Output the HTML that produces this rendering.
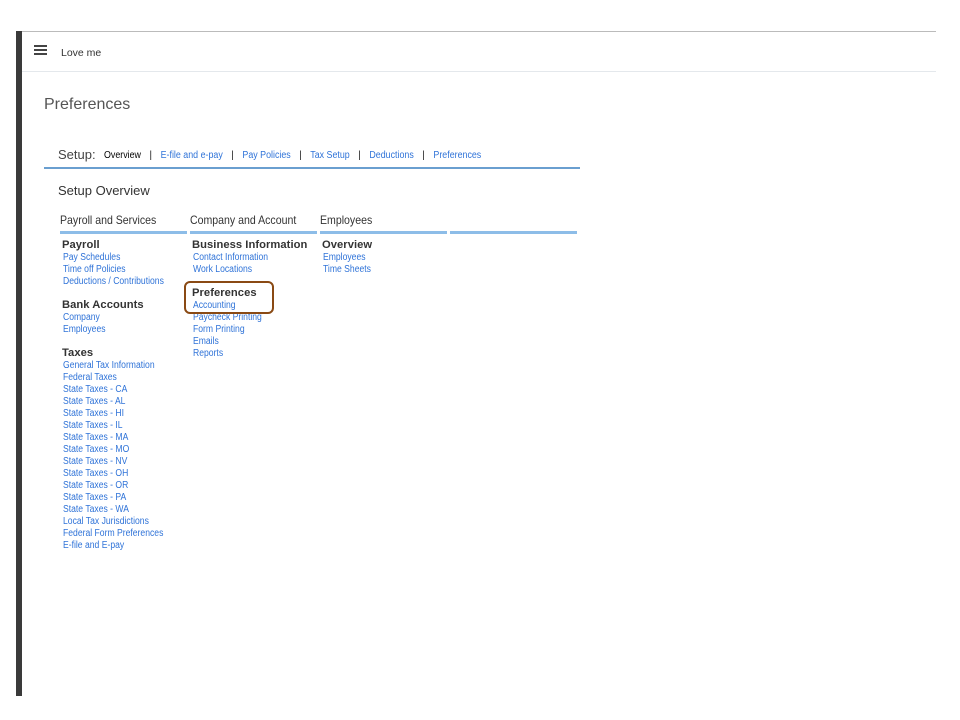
<!DOCTYPE html>
<html><head><meta charset="utf-8"><style>
body{margin:0;width:960px;height:720px;background:#fff;position:relative;font-family:"Liberation Sans",sans-serif;overflow:hidden}
.a{position:absolute;white-space:nowrap}
.lk{color:#2f73d8;font-size:10px;line-height:12px;transform:scaleX(.86);transform-origin:0 0;margin-left:1px}
.h{font-size:11.2px;font-weight:bold;color:#333;letter-spacing:.05px;line-height:14px;margin-top:1px}
.col{font-size:12px;color:#333;transform:scaleX(.88);transform-origin:0 0}
.bar{position:absolute;height:3px;background:#8dbde8;top:231px;width:127px}
</style></head><body>
<div class="a" style="left:16px;top:31px;width:6px;height:665px;background:#3a3a3a"></div>
<div class="a" style="left:22px;top:31px;width:914px;height:1px;background:#bbb"></div>
<div class="a" style="left:22px;top:71px;width:914px;height:1px;background:#e4e8ec"></div>
<div class="a" style="left:34px;top:45px;width:13px;height:2px;background:#444;box-shadow:0 4px 0 #444,0 8px 0 #444"></div>
<div class="a" style="left:61px;top:47px;font-size:10.5px;color:#333">Love me</div>
<div class="a" style="left:44px;top:96px;font-size:16px;color:#555">Preferences</div>
<div class="a" style="left:58px;top:147px;font-size:13px;color:#444">Setup:</div>
<div class="a" style="left:104px;top:150px;font-size:10px;color:#000;transform:scaleX(.887);transform-origin:0 0">Overview <span style="margin:0 7px">|</span> <span style="color:#2f73d8">E-file and e-pay</span> <span style="margin:0 7px">|</span> <span style="color:#2f73d8">Pay Policies</span> <span style="margin:0 7px">|</span> <span style="color:#2f73d8">Tax Setup</span> <span style="margin:0 7px">|</span> <span style="color:#2f73d8">Deductions</span> <span style="margin:0 7px">|</span> <span style="color:#2f73d8">Preferences</span></div>
<div class="a" style="left:44px;top:167px;width:536px;height:2px;background:#6a9fd0"></div>
<div class="a" style="left:58px;top:183px;font-size:13px;color:#333">Setup Overview</div>
<div class="a col" style="left:60px;top:213px">Payroll and Services</div>
<div class="a col" style="left:190px;top:213px">Company and Account</div>
<div class="a col" style="left:320px;top:213px">Employees</div>
<div class="bar" style="left:60px"></div><div class="bar" style="left:190px"></div><div class="bar" style="left:320px"></div><div class="bar" style="left:450px"></div>
<div class="a" style="left:62px;top:237px">
<div class="h">Payroll</div>
<div class="lk">Pay Schedules<br>Time off Policies<br>Deductions / Contributions</div>
<div class="h" style="margin-top:10px">Bank Accounts</div>
<div class="lk">Company<br>Employees</div>
<div class="h" style="margin-top:10px">Taxes</div>
<div class="lk">General Tax Information<br>Federal Taxes<br>State Taxes - CA<br>State Taxes - AL<br>State Taxes - HI<br>State Taxes - IL<br>State Taxes - MA<br>State Taxes - MO<br>State Taxes - NV<br>State Taxes - OH<br>State Taxes - OR<br>State Taxes - PA<br>State Taxes - WA<br>Local Tax Jurisdictions<br>Federal Form Preferences<br>E-file and E-pay</div>
</div>
<div class="a" style="left:192px;top:237px">
<div class="h">Business Information</div>
<div class="lk">Contact Information<br>Work Locations</div>
<div class="h" style="margin-top:10px">Preferences</div>
<div class="lk">Accounting<br>Paycheck Printing<br>Form Printing<br>Emails<br>Reports</div>
</div>
<div class="a" style="left:322px;top:237px">
<div class="h">Overview</div>
<div class="lk">Employees<br>Time Sheets</div>
</div>
<div class="a" style="left:184px;top:281px;width:86px;height:29px;border:2px solid #8a4a14;border-radius:6px"></div>
</body></html>
